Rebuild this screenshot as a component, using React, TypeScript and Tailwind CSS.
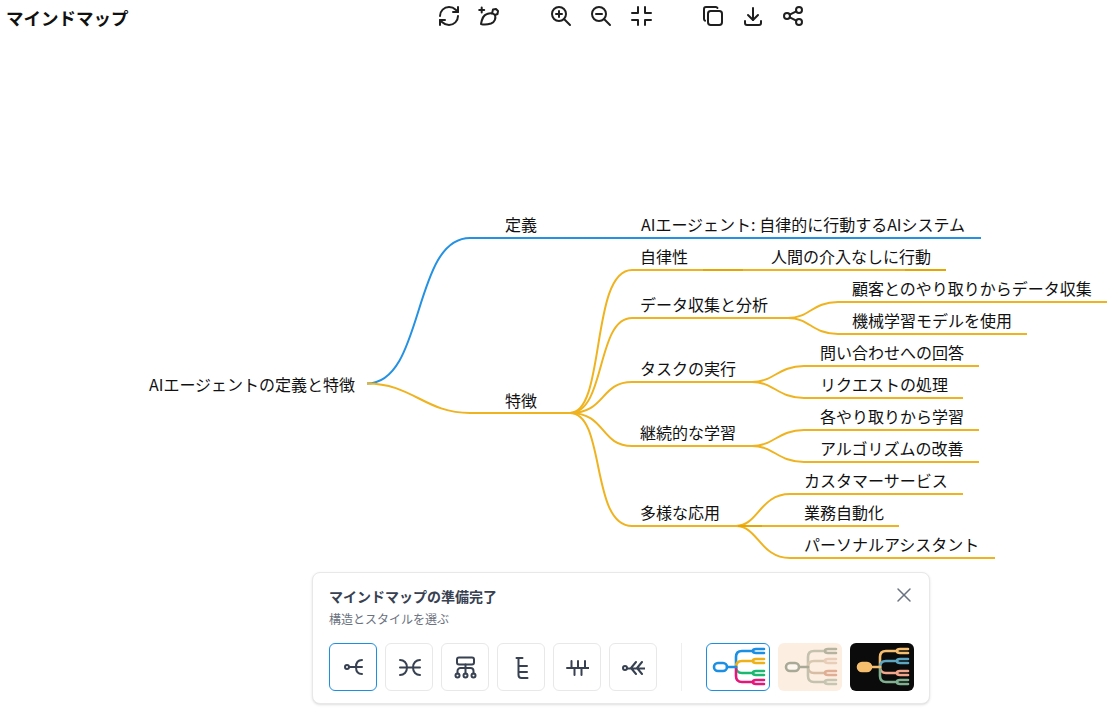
import { RefreshCw } from "lucide-react";
import { TbCopy, TbDownload, TbShare, TbX, TbZoomIn, TbZoomOut } from "react-icons/tb";

const BLUE = "#2491e2";
const ORANGE = "#efb320";
const ORANGE_DARK = "#e6a500";

const labels = [
  { text: "AIエージェントの定義と特徴", x: 149, y: 373 },
  { text: "定義", x: 505, y: 213 },
  { text: "特徴", x: 505, y: 389 },
  { text: "AIエージェント: 自律的に行動するAIシステム", x: 641, y: 213 },
  { text: "自律性", x: 640, y: 245 },
  { text: "人間の介入なしに行動", x: 771, y: 245 },
  { text: "データ収集と分析", x: 640, y: 293 },
  { text: "顧客とのやり取りからデータ収集", x: 852, y: 277 },
  { text: "機械学習モデルを使用", x: 852, y: 309 },
  { text: "タスクの実行", x: 640, y: 357 },
  { text: "問い合わせへの回答", x: 820, y: 341 },
  { text: "リクエストの処理", x: 820, y: 373 },
  { text: "継続的な学習", x: 640, y: 421 },
  { text: "各やり取りから学習", x: 820, y: 405 },
  { text: "アルゴリズムの改善", x: 820, y: 437 },
  { text: "多様な応用", x: 640, y: 501 },
  { text: "カスタマーサービス", x: 804, y: 469 },
  { text: "業務自動化", x: 804, y: 501 },
  { text: "パーソナルアシスタント", x: 804, y: 533 },
];

const branches = [
  "M570 413 C606 413 590 270 632 270 H946",
  "M570 413 C606 413 596 318 632 318 H788",
  "M570 413 C606 413 600 382 632 382 H752",
  "M570 413 C606 413 600 446 632 446 H752",
  "M570 413 C606 413 590 526 632 526 H736",
  "M788 318 C810 318 812 302 838 302 H1107",
  "M788 318 C810 318 812 334 838 334 H1027",
  "M752 382 C774 382 778 366 804 366 H979",
  "M752 382 C774 382 778 398 804 398 H963",
  "M752 446 C774 446 778 430 804 430 H979",
  "M752 446 C774 446 778 462 804 462 H979",
  "M736 526 C758 526 760 494 790 494 H963",
  "M736 526 H899",
  "M736 526 C758 526 760 558 790 558 H995",
];

const darkSegments = ["M703 270 H743", "M905 270 H946", "M738 526 H762"];

function MindMapLines() {
  return (
    <svg className="absolute left-0 top-0" width="1115" height="712" fill="none" strokeWidth="2">
      <path d="M367 383.5 C425 383.5 412 238 470 238 H981" stroke={BLUE} />
      <path d="M367 383.5 C412 383.5 425 413 470 413 H570" stroke={ORANGE} />
      {branches.map((d) => (
        <path key={d} d={d} stroke={ORANGE} />
      ))}
      {darkSegments.map((d) => (
        <path key={d} d={d} stroke={ORANGE_DARK} />
      ))}
    </svg>
  );
}

function PaintIcon() {
  return (
    <svg width="24" height="24" viewBox="0 0 24 24" fill="none" stroke="currentColor" strokeWidth="2" strokeLinecap="round" strokeLinejoin="round">
      <path d="M4.700 3.500v5M2.200 6h5" />
      <path d="M4 20C5 15 6 11 10 10C13 9 16 9 18 11C19 14 18 18 14 19.500C11 20.500 7 21 4 20z" />
      <path d="M15 9.500L16 5.500L19 5L21 7L20.500 10L18 11" />
    </svg>
  );
}

function MinimizeIcon() {
  return (
    <svg width="24" height="24" viewBox="0 0 24 24" fill="none" stroke="currentColor" strokeWidth="2" strokeLinecap="round" strokeLinejoin="round">
      <path d="M3 9h6V3M16 3v6h6M3 16h6v5M22 16h-6v5" />
    </svg>
  );
}

function LayoutIcon({ kind }: { kind: number }) {
  const paths = [
    <>
      <circle cx="6" cy="12" r="2" />
      <path d="M8 12h13M21 5c-4 0-6 3-6 7s2 7 6 7" />
    </>,
    <>
      <path d="M3 5c4 0 7 3 7 7.500S7 20 3 20M23 5c-4 0-7 3-7 7.500s3 7.500 7 7.500M3 12.500h20" />
    </>,
    <>
      <rect x="4" y="2.500" width="17" height="7" rx="2" />
      <path d="M4.500 18.500v-2.500a3 3 0 0 1 3-3h10a3 3 0 0 1 3 3v2.500M12.500 9.500v9" />
      <circle cx="4.500" cy="20.500" r="2" />
      <circle cx="12.500" cy="20.500" r="2" />
      <circle cx="20.500" cy="20.500" r="2" />
    </>,
    <>
      <path d="M7.500 3h6M9.500 3v17a3 3 0 0 0 3 3h6M9.500 11h8.500M9.500 17h8.500" />
    </>,
    <>
      <path d="M2 13h22M6.500 6v7M13 6v7M20 6v7M9.500 13v7M16.500 13v7" />
    </>,
    <>
      <circle cx="4" cy="13" r="2" />
      <path d="M6 13.500h18M15 7l-5 6 5 6M21 7l-5 6 5 6" />
    </>,
  ];
  return (
    <svg width="24" height="24" viewBox="0 0 24 24" fill="none" stroke="#374151" strokeWidth="2" strokeLinecap="round" strokeLinejoin="round">
      {paths[kind]}
    </svg>
  );
}

const forkYs = [8, 18, 30, 39];

function ThemeThumb({ mains, forks, root, rootFill, bg, active }: { mains: string[]; forks: string[]; root: string; rootFill: string; bg: string; active?: boolean }) {
  const mainPaths = [
    "M30 24 V14 Q30 8 36 8 H47",
    "M30 24 C30 20 32 18 36 18 H47",
    "M30 24 C30 27 32 30 36 30 H47",
    "M30 24 V33 Q30 39 36 39 H47",
  ];
  return (
    <div className={`h-12 w-16 shrink-0 overflow-hidden rounded-md border ${active ? "border-[#1a8fe3]" : "border-transparent"}`} style={{ background: bg }}>
      <svg width="62" height="46" viewBox="1 1 62 46" fill="none" strokeWidth="2.600" strokeLinecap="round">
        {forkYs.map((y, i) => (
          <g key={y}>
            <path d={mainPaths[i]} stroke={mains[i]} />
            <path d={`M58 ${y - 2} H50 Q47 ${y - 2} 47 ${y} Q47 ${y + 2} 50 ${y + 2} H58`} stroke={forks[i]} />
          </g>
        ))}
        <path d="M21 24 H30" stroke={root} />
        <rect x="8" y="20" width="13" height="8" rx="4" stroke={root} fill={rootFill} />
      </svg>
    </div>
  );
}

export default function App() {
  return (
    <div className="relative h-[712px] w-[1115px] overflow-hidden bg-white font-['Noto_Sans_CJK_JP','Noto_Sans',sans-serif] text-[#111]">
      <div className="flex h-8 items-center">
        <div className="w-[437px] pl-[6px] pt-1 text-[17.500px] font-bold">マインドマップ</div>
        <div className="flex gap-4 text-[#1f1f1f]">
          <RefreshCw size={24} />
          <PaintIcon />
        </div>
        <div className="ml-[48px] flex gap-4 text-[#1f1f1f]">
          <TbZoomIn size={24} />
          <TbZoomOut size={24} />
          <MinimizeIcon />
        </div>
        <div className="ml-[48px] flex gap-4 text-[#1f1f1f]">
          <TbCopy size={24} />
          <TbDownload size={24} />
          <TbShare size={24} />
        </div>
      </div>

      <MindMapLines />
      {labels.map((l) => (
        <div key={l.text} className="absolute whitespace-nowrap text-base leading-[22px]" style={{ left: l.x, top: l.y }}>
          {l.text}
        </div>
      ))}

      <div className="absolute left-[312px] top-[572px] w-[618px] rounded-lg border border-[#e8e8e8] bg-white pb-3 pl-4 pr-[15px] pt-4 shadow-sm">
        <div className="flex justify-between">
          <div>
            <div className="text-sm font-bold leading-[14px] text-[#374151]">マインドマップの準備完了</div>
            <div className="mt-2 text-xs leading-[16px] text-[#6b7280]">構造とスタイルを選ぶ</div>
          </div>
          <TbX size={24} strokeWidth={1.5} className="-mr-[2px] -mt-[6px] text-[#6b7280]" />
        </div>
        <div className="mt-4 flex items-center">
          <div className="flex gap-2">
            {[0, 1, 2, 3, 4, 5].map((k) => (
              <div key={k} className={`flex h-12 w-12 items-center justify-center rounded-md border ${k === 0 ? "border-[#1a8fe3]" : "border-[#e8e8e8]"}`}>
                <LayoutIcon kind={k} />
              </div>
            ))}
          </div>
          <div className="mx-6 h-12 w-px shrink-0 bg-[#eeeeee]" />
          <div className="flex gap-2">
            <ThemeThumb active bg="#ffffff" root="#1a8fe3" rootFill="none" mains={["#1a8fe3", "#efb118", "#1ab871", "#e6177a"]} forks={["#1a8fe3", "#efb118", "#1ab871", "#e6177a"]} />
            <ThemeThumb bg="#fdeee2" root="#a9a998" rootFill="#fdf6ef" mains={["#c4c2ae", "#d8c8b0", "#d8bca4", "#c4c2ae"]} forks={["#b5b3a0", "#e8cdb8", "#e0ae94", "#c5c5b2"]} />
            <ThemeThumb bg="#0b0b0b" root="#f5bd6e" rootFill="#f5bd6e" mains={["#f5bd6e", "#5da5c0", "#f2a58a", "#7fb08f"]} forks={["#f5bd6e", "#5da5c0", "#f2a58a", "#7fb08f"]} />
          </div>
        </div>
      </div>
    </div>
  );
}
